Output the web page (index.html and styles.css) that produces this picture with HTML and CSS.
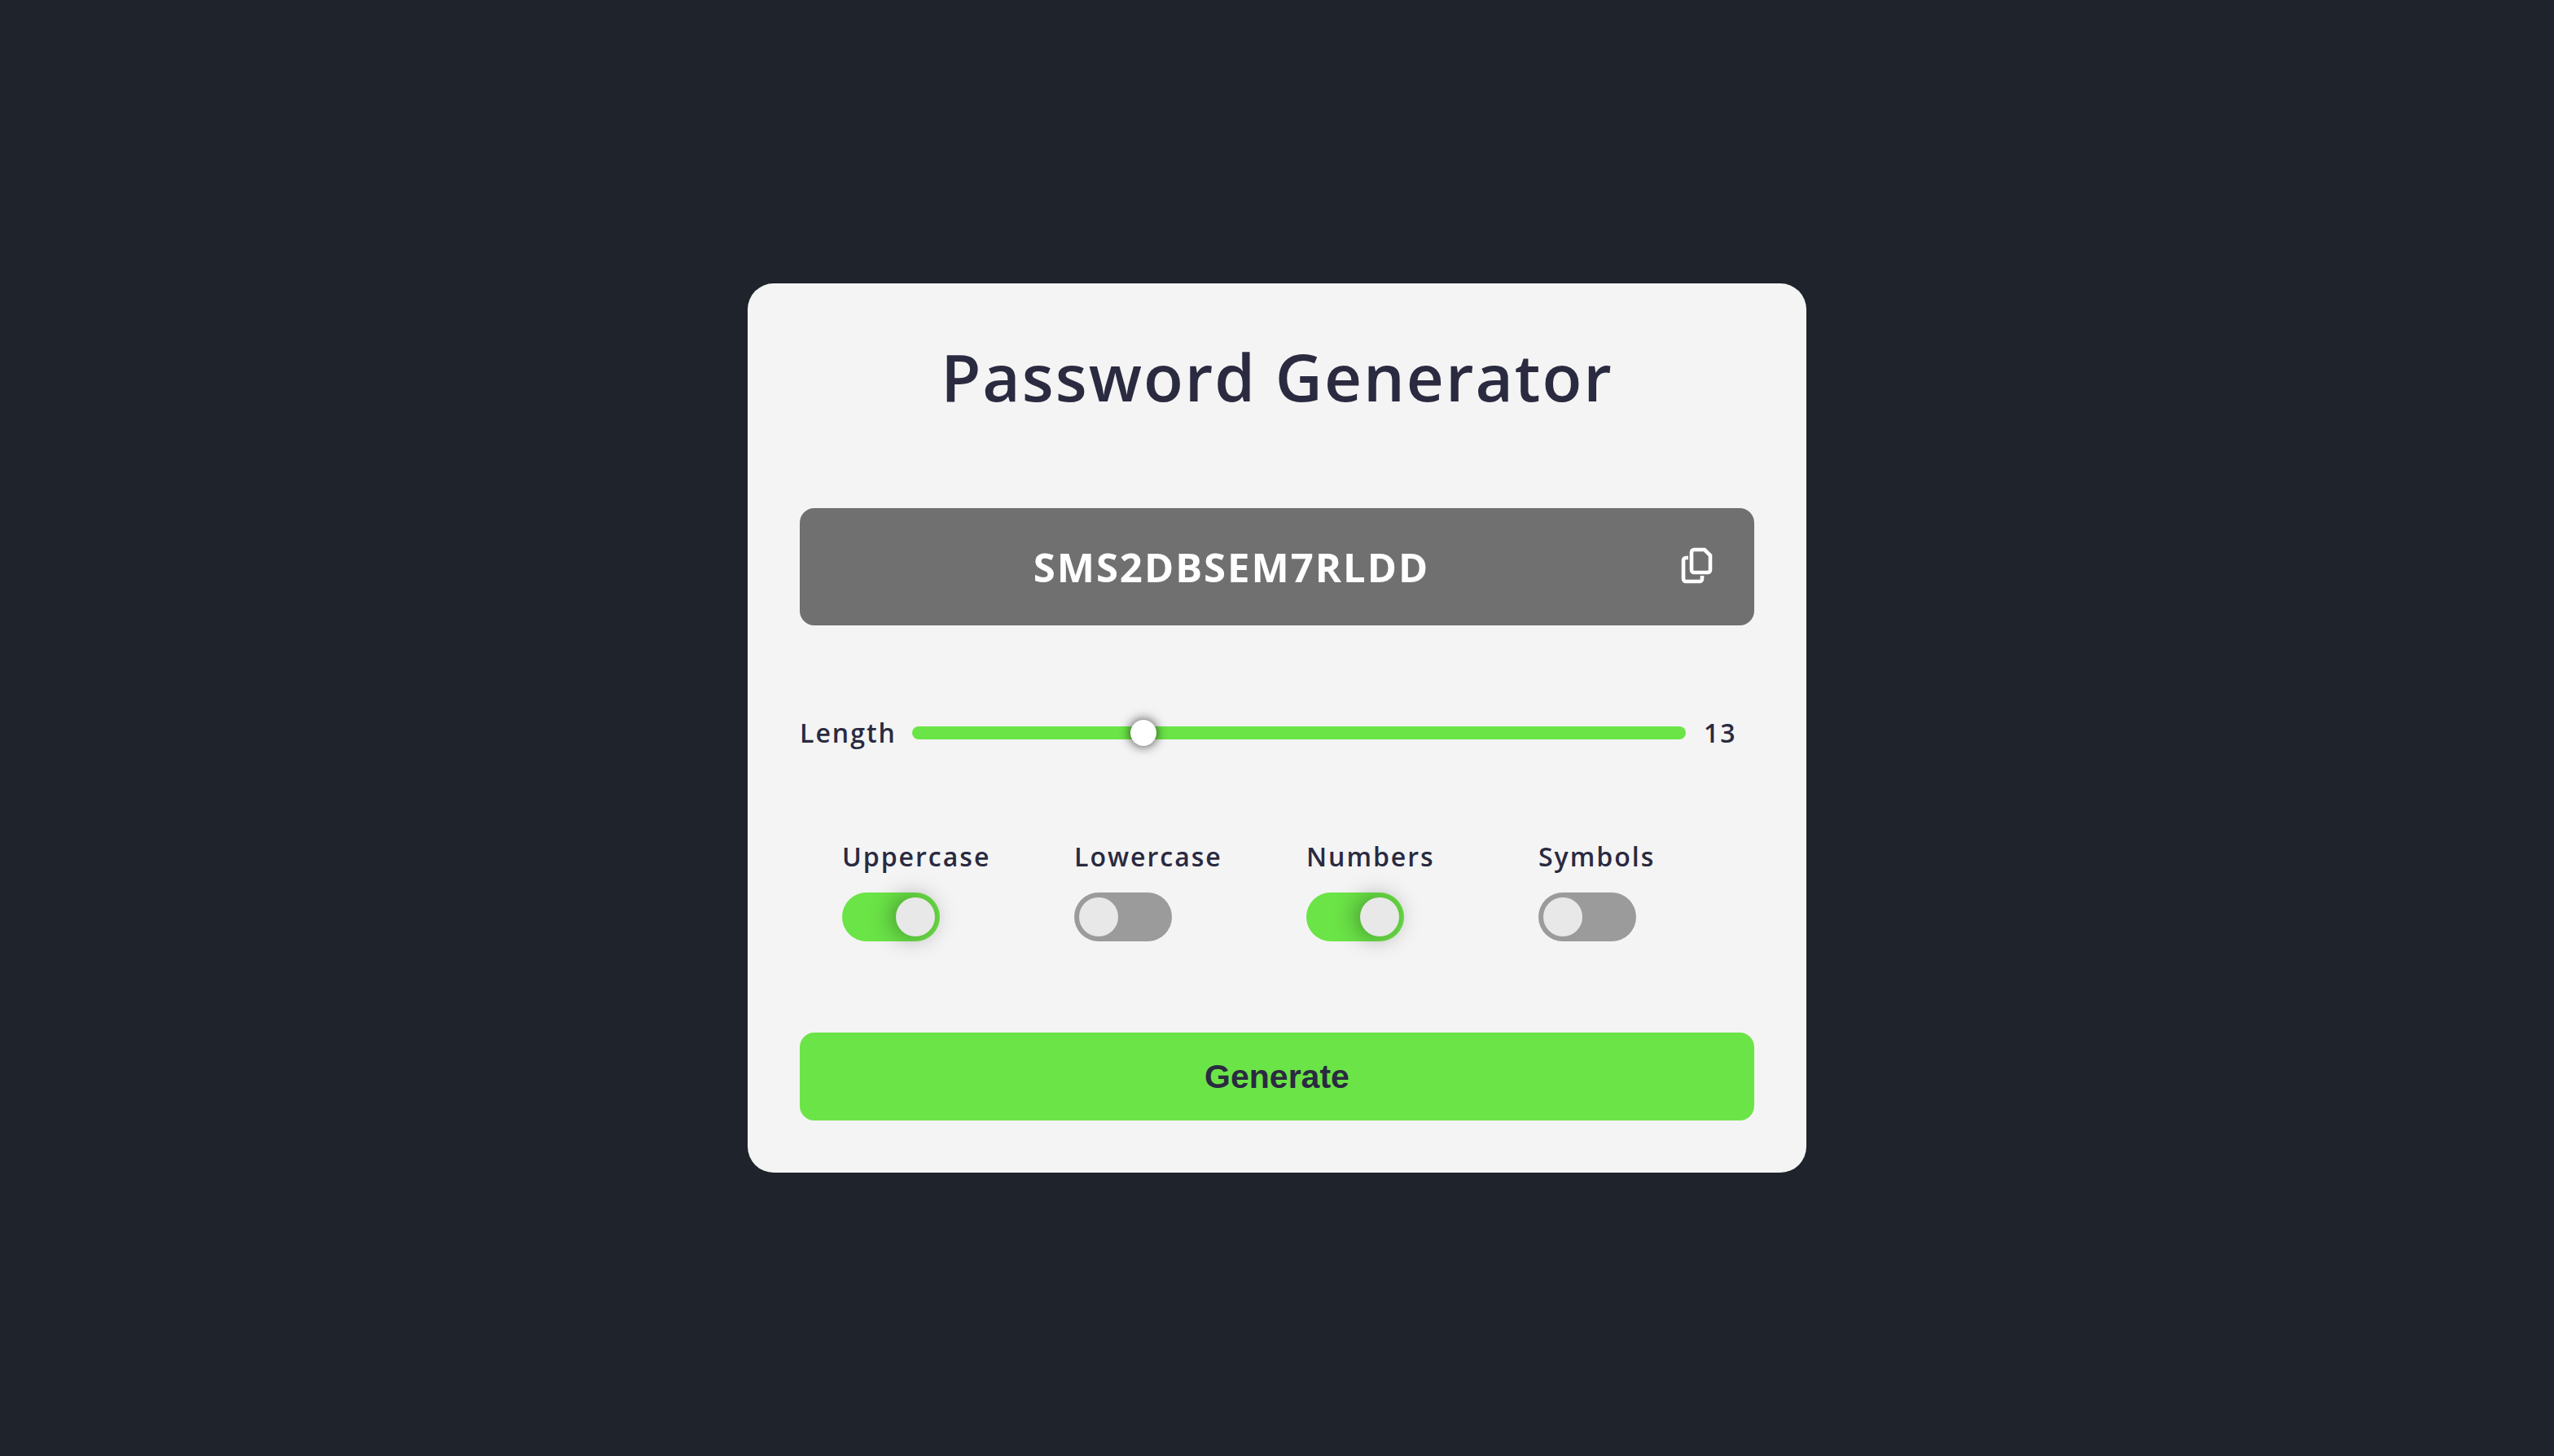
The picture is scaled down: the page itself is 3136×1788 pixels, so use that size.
FILE: index.html
```html
<!DOCTYPE html>
<html lang="en">
<head>
  <meta charset="utf-8">
  <meta name="viewport" content="width=device-width, initial-scale=1">
  <title>Password Generator</title>
  <link rel="stylesheet" href="styles.css">
</head>
<body>
  <main class="card">
    <h1 class="title">Password Generator</h1>

    <div class="result">
      <input class="result-text" type="text" value="SMS2DBSEM7RLDD" aria-label="Generated password" readonly>
      <button class="copy" type="button" aria-label="Copy password">
        <svg class="copy-icon" viewBox="-1 0 40 46" fill="none" stroke="currentColor" stroke-width="4.6" aria-hidden="true">
          <path d="M15 2H28L35 9V27A3 3 0 0 1 32 30H15A3 3 0 0 1 12 27V5A3 3 0 0 1 15 2Z"/>
          <path d="M8 12H5A3 3 0 0 0 2 15V38A3 3 0 0 0 5 41H22A3 3 0 0 0 25 38V34"/>
        </svg>
      </button>
    </div>

    <div class="length">
      <label class="length-label" for="length">Length</label>
      <input class="slider" id="length" type="range" min="6" max="30" value="13">
      <output class="length-value" for="length">13</output>
    </div>

    <div class="options">
      <label class="option">Uppercase
        <input class="switch" type="checkbox" checked>
      </label>
      <label class="option">Lowercase
        <input class="switch" type="checkbox">
      </label>
      <label class="option">Numbers
        <input class="switch" type="checkbox" checked>
      </label>
      <label class="option">Symbols
        <input class="switch" type="checkbox">
      </label>
    </div>

    <button class="generate" type="button">Generate</button>
  </main>
</body>
</html>
```

FILE: styles.css
```css
* {
  box-sizing: border-box;
}

body {
  margin: 0;
  min-height: 100vh;
  display: flex;
  align-items: center;
  justify-content: center;
  background: #1f232b;
  color: #2a2a40;
  font-family: "Open Sans", "Noto Sans", sans-serif;
  font-size: 32px;
  font-weight: 600;
  line-height: 40px;
  letter-spacing: 2px;
}

.card {
  width: 100%;
  max-width: 1300px;
  padding: 64px;
  display: flex;
  flex-direction: column;
  gap: 112px;
  background: #f4f4f4;
  border-radius: 32px;
}

.title {
  margin: 0;
  font-size: 80px;
  font-weight: 650;
  line-height: 100px;
  text-align: center;
}

.result {
  display: flex;
  align-items: center;
  gap: 72px;
  padding: 42px 50px;
  background: #707070;
  border-radius: 18px;
  color: #fff;
}

.result-text {
  flex: 1;
  min-width: 0;
  height: 60px;
  padding: 0;
  border: 0;
  background: none;
  color: inherit;
  font: inherit;
  font-size: 49px;
  font-weight: 700;
  letter-spacing: inherit;
  text-align: center;
}

.copy {
  display: flex;
  padding: 0;
  border: 0;
  background: none;
  color: inherit;
  cursor: pointer;
}

.copy-icon {
  width: 40px;
  height: 46px;
  overflow: visible;
}

.length {
  display: flex;
  align-items: center;
  gap: 22px;
}

.length-label {
  width: 116px;
}

.slider {
  flex: 1;
  min-width: 0;
  height: 16px;
  margin: 0;
  appearance: none;
  background: #6be447;
  border-radius: 8px;
  cursor: pointer;
}

.slider::-webkit-slider-thumb {
  appearance: none;
  width: 32px;
  height: 32px;
  background: #fff;
  border-radius: 50%;
  box-shadow: 0 0 14px rgba(0, 0, 0, 0.8);
}

.length-value {
  width: 62px;
}

.options {
  display: grid;
  grid-template-columns: repeat(4, 1fr);
  gap: 72px;
  padding: 0 52px;
}

.option {
  display: flex;
  flex-direction: column;
  gap: 24px;
}

.switch {
  width: 120px;
  height: 60px;
  margin: 0;
  padding: 6px;
  display: flex;
  appearance: none;
  background: #9b9b9b;
  border-radius: 30px;
  cursor: pointer;
}

.switch::before {
  content: "";
  width: 48px;
  height: 48px;
  background: #e8e8e8;
  border-radius: 50%;
}

.switch:checked {
  justify-content: flex-end;
  background: #6be447;
}

.switch:checked::before {
  box-shadow: -4px 0 30px rgba(0, 0, 0, 0.4);
}

.generate {
  height: 108px;
  border: 0;
  border-radius: 18px;
  background: #6be447;
  color: inherit;
  font-family: "Liberation Sans", Arial, sans-serif;
  font-size: 41px;
  font-weight: 700;
  cursor: pointer;
}
```
